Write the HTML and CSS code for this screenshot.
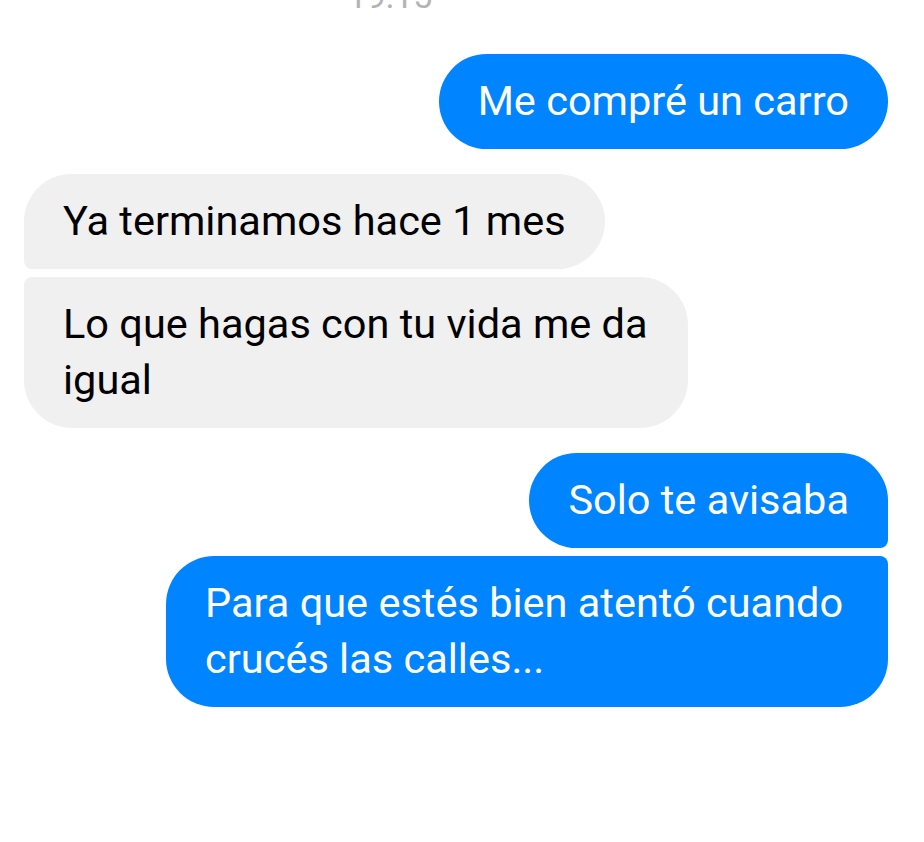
FILE: index.html
```html
<!DOCTYPE html>
<html lang="es">

<head>
    <meta charset="UTF-8">
    <meta name="viewport" content="width=device-width, initial-scale=1.0">
    <title>Chat</title>
    <link rel="stylesheet" href="styles.css">
</head>

<body>
    <div class="chat">
        <div class="timestamp"><span>19:15</span></div>

        <div class="group sent">
            <div class="bubble">Me compré un carro</div>
        </div>

        <div class="group received">
            <div class="bubble">Ya terminamos hace 1 mes</div>
            <div class="bubble">Lo que hagas con tu vida me da igual</div>
        </div>

        <div class="group sent">
            <div class="bubble">Solo te avisaba</div>
            <div class="bubble">Para que estés bien atentó cuando crucés las calles...</div>
        </div>
    </div>
</body>

</html>
```

FILE: styles.css
```css
body {
    margin: 0;
    background: #fff;
    font-family: Roboto, "Noto Sans", sans-serif;
}

.chat {
    display: flex;
    flex-direction: column;
    gap: 25px;
    padding: 0 36px 0 24px;
}

.timestamp {
    height: 29px;
    text-align: center;
    padding-right: 132px;
}

.timestamp span {
    display: block;
    margin-top: -23px;
    font-size: 34px;
    line-height: 38px;
    color: #b3b3b3;
}

.group {
    display: flex;
    flex-direction: column;
    gap: 8px;
}

.sent {
    align-items: flex-end;
}

.received {
    align-items: flex-start;
}

.bubble {
    font-size: 41.5px;
    line-height: 56px;
    padding: 19px 39px 20px;
    border-radius: 48px;
}

.sent .bubble {
    background-color: #0084ff;
    color: #fff;
    max-width: 644px;
}

.received .bubble {
    background-color: #f0f0f0;
    color: #000;
    max-width: 586px;
}

/* grouped corners */
.sent .bubble:not(:last-child) {
    border-bottom-right-radius: 8px;
}

.sent .bubble:not(:first-child) {
    border-top-right-radius: 8px;
}

.received .bubble:not(:last-child) {
    border-bottom-left-radius: 8px;
}

.received .bubble:not(:first-child) {
    border-top-left-radius: 8px;
}
```
